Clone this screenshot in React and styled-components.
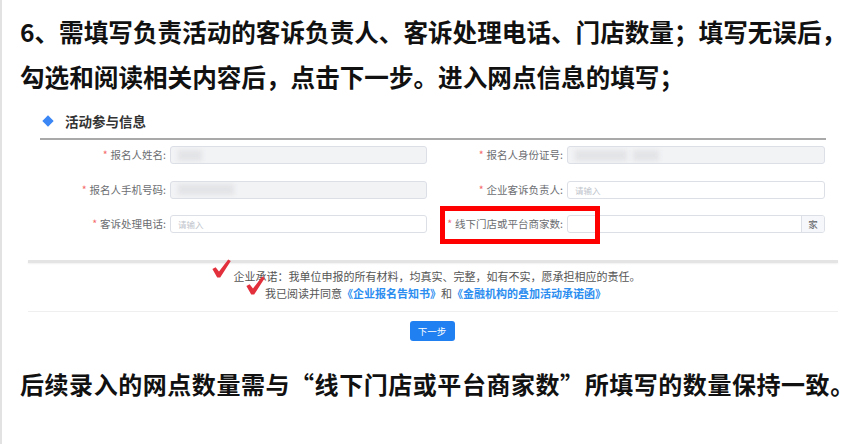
import React from "react";
import styled, { createGlobalStyle } from "styled-components";

const GlobalStyle = createGlobalStyle`
  html, body { margin: 0; padding: 0; background: #fff; }
  body {
    width: 864px; height: 444px; overflow: hidden;
    font-family: "Noto Sans CJK SC", "Noto Sans", sans-serif;
  }
  * { box-sizing: border-box; }
`;

const Page = styled.div`
  width: 864px;
  height: 444px;
  border-left: 2px solid #e2e2e2;
  background: #fff;
`;

const Heading = styled.p`
  margin: 0;
  padding: ${(p) => p.$top}px 0 0 18px;
  font-size: ${(p) => p.$size}px;
  letter-spacing: ${(p) => p.$ls}px;
  font-weight: 700;
  line-height: 45px;
  color: #111;
  white-space: nowrap;
`;

const Form = styled.section`
  margin: 5px 0 0 38px;
  width: 786px;
`;

const SectionHeader = styled.div`
  display: flex;
  align-items: center;
  height: 36px;
  padding-left: 4px;
  border-bottom: 2px solid #a9a9a9;
`;

const Diamond = styled.span`
  width: 8px;
  height: 8px;
  background: #3b87f5;
  transform: rotate(45deg);
  margin-right: 13px;
`;

const SectionTitle = styled.span`
  font-size: 13.5px;
  font-weight: 700;
  color: #333;
`;

const Grid = styled.div`
  display: grid;
  grid-template-columns: 130px 257px 140px 258px;
  grid-auto-rows: 18px;
  row-gap: 16.5px;
  padding-top: 6px;
`;

const Label = styled.div`
  position: relative;
  text-align: right;
  padding-right: 4px;
  font-size: 10.5px;
  line-height: 18px;
  color: #6b6d71;
  white-space: nowrap;
`;

const Star = styled.span`
  color: #f56c6c;
  margin-right: 3px;
`;

const Input = styled.div`
  display: flex;
  align-items: center;
  height: 18px;
  border: 1px solid #dcdfe6;
  border-radius: 3px;
  background: ${(p) => (p.$disabled ? "#f2f3f5" : "#fff")};
  overflow: hidden;
`;

const Field = styled.div`
  flex: 1;
  height: 100%;
  display: flex;
  align-items: center;
  padding-left: 7px;
  gap: 6px;
`;

const Placeholder = styled.span`
  font-size: 8.5px;
  color: #c0c4cc;
`;

const Blur = styled.span`
  display: block;
  width: ${(p) => p.$w}px;
  height: 11px;
  background: #e3e4e7;
  filter: blur(2px);
`;

const Suffix = styled.div`
  width: 23px;
  height: 100%;
  border-left: 1px solid #dcdfe6;
  background: #f5f7fa;
  font-size: 9.5px;
  color: #606266;
  display: flex;
  align-items: center;
  justify-content: center;
`;

const RedBox = styled.div`
  position: absolute;
  left: 13px;
  top: -9px;
  width: 160px;
  height: 38px;
  border: 5px solid #ff0000;
`;

const Divider = styled.div`
  margin: 27px 0 0 26px;
  width: 810px;
  height: 3px;
  background: #e4e4e4;
  box-shadow: 0 1px 2px rgba(0, 0, 0, 0.06);
`;

const Consent = styled.div`
  margin-left: 26px;
  width: 810px;
  padding: 5px 14px 9px 0;
  border-bottom: 1px solid #efefef;
  display: flex;
  flex-direction: column;
  align-items: center;
`;

const ConsentLine = styled.div`
  display: flex;
  align-items: flex-start;
  gap: ${(p) => p.$gap}px;
  height: 17px;
  font-size: 11px;
  line-height: 17px;
  color: #555;
  white-space: nowrap;
`;

const TickWrap = styled.span`
  display: block;
  width: 19px;
  height: 19px;
  margin-top: -9px;
`;

const Link = styled.span`
  color: #2b8df0;
  font-weight: 700;
`;

const ButtonRow = styled.div`
  display: flex;
  justify-content: center;
  padding-top: 9px;
  margin-left: -2px;
`;

const Button = styled.button`
  width: 45px;
  height: 20px;
  border: none;
  border-radius: 3px;
  background: #2080f2;
  color: #fff;
  font-family: inherit;
  font-size: 9.5px;
  padding: 0;
`;

const Tick = () => (
  <TickWrap>
    <svg width="19" height="19" viewBox="0 0 19 19">
      <path
        d="M0.4 10 L3.6 8.2 L7 12.6 L16.2 0.4 L18.8 2 L8.2 18.4 L5.2 18.4 Z"
        fill="#e3303d"
      />
    </svg>
  </TickWrap>
);

const rows = [
  [
    { label: "报名人姓名:", disabled: true, blur: [24] },
    { label: "报名人身份证号:", disabled: true, blur: [52, 26] },
  ],
  [
    { label: "报名人手机号码:", disabled: true, blur: [56] },
    { label: "企业客诉负责人:", placeholder: "请输入" },
  ],
  [
    { label: "客诉处理电话:", placeholder: "请输入" },
    { label: "线下门店或平台商家数:", suffix: "家", mark: true },
  ],
];

export default function App() {
  return (
    <>
      <GlobalStyle />
      <Page>
        <Heading $top={9} $size={24.6} $ls={0}>
          6、需填写负责活动的客诉负责人、客诉处理电话、门店数量；填写无误后，
          <br />
          勾选和阅读相关内容后，点击下一步。进入网点信息的填写；
        </Heading>
        <Form>
          <SectionHeader>
            <Diamond />
            <SectionTitle>活动参与信息</SectionTitle>
          </SectionHeader>
          <Grid>
            {rows.map((row, i) =>
              row.map((f, j) => (
                <React.Fragment key={`${i}-${j}`}>
                  <Label>
                    <Star>*</Star>
                    {f.label}
                    {f.mark && <RedBox />}
                  </Label>
                  <Input $disabled={f.disabled}>
                    <Field>
                      {f.blur && f.blur.map((w, k) => <Blur key={k} $w={w} />)}
                      {f.placeholder && <Placeholder>{f.placeholder}</Placeholder>}
                    </Field>
                    {f.suffix && <Suffix>{f.suffix}</Suffix>}
                  </Input>
                </React.Fragment>
              ))
            )}
          </Grid>
        </Form>
        <Divider />
        <Consent>
          <ConsentLine $gap={3}>
            <Tick />
            企业承诺：我单位申报的所有材料，均真实、完整，如有不实，愿承担相应的责任。
          </ConsentLine>
          <ConsentLine $gap={0}>
            <Tick />
            我已阅读并同意<Link>《企业报名告知书》</Link>和<Link>《金融机构的叠加活动承诺函》</Link>
          </ConsentLine>
        </Consent>
        <ButtonRow>
          <Button>下一步</Button>
        </ButtonRow>
        <Heading $top={20} $size={24} $ls={0.55}>
          后续录入的网点数量需与“线下门店或平台商家数”所填写的数量保持一致。
        </Heading>
      </Page>
    </>
  );
}
